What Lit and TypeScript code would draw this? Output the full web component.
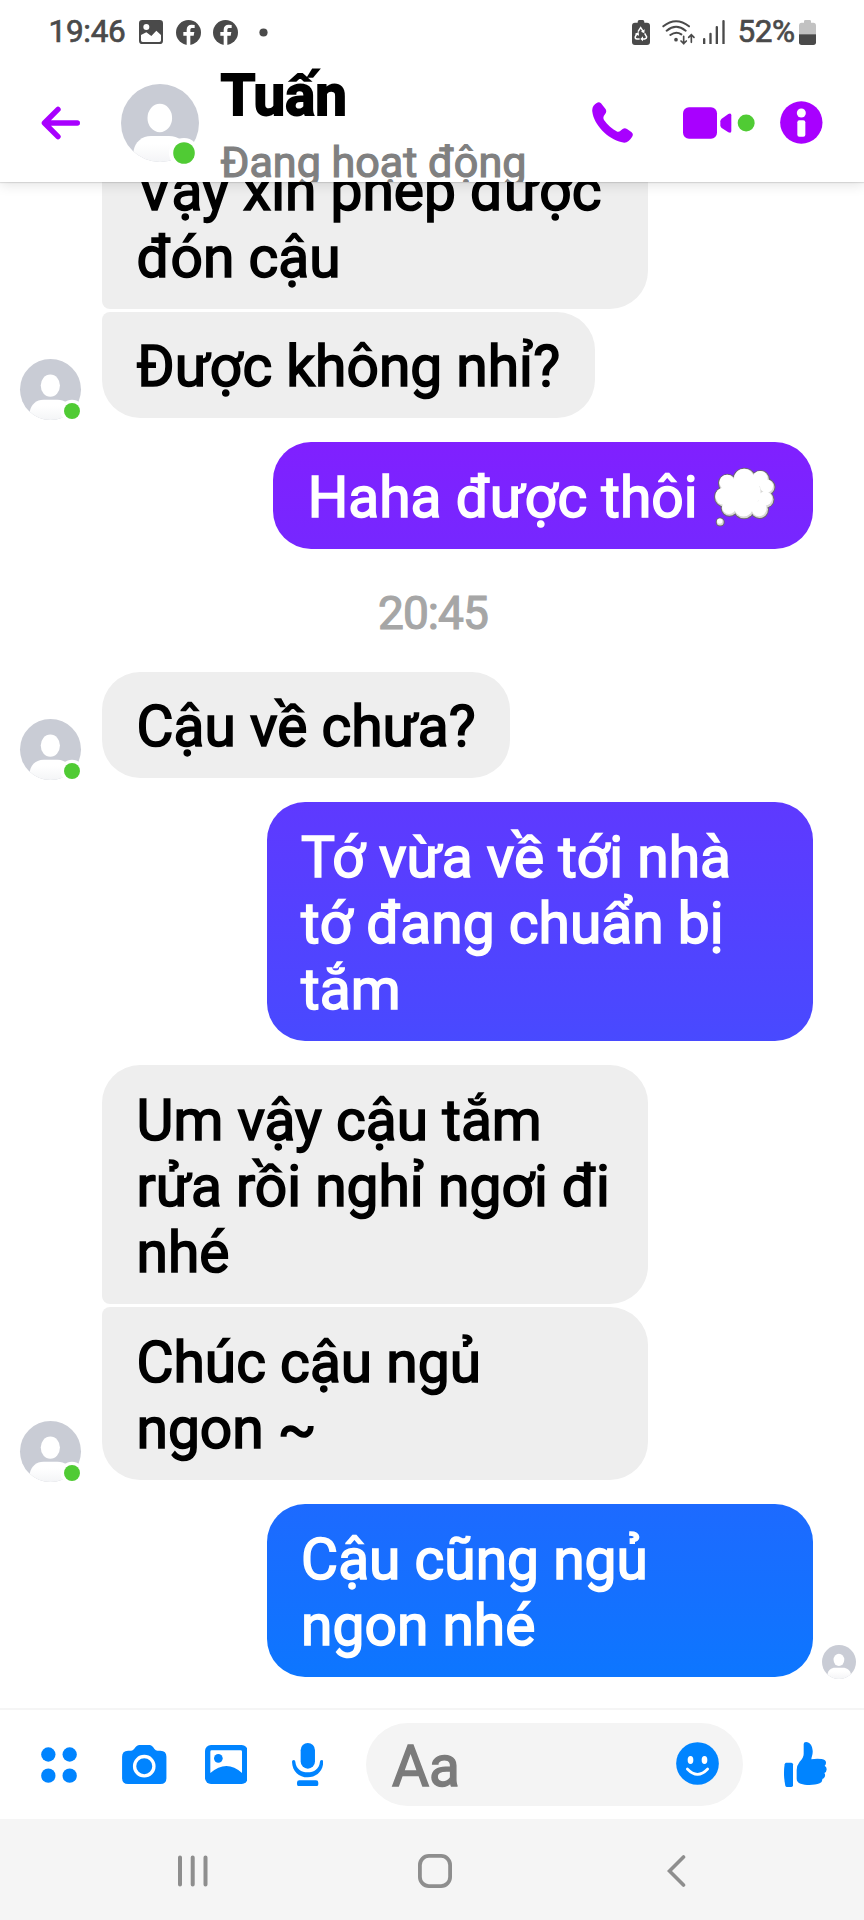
import { LitElement, html, css, svg, nothing } from "lit";
import { customElement, property } from "lit/decorators.js";

type Message = {
  from: "them" | "me";
  text: string;
  wide?: boolean;
  join?: "above" | "below";
  avatar?: boolean;
  thought?: boolean;
  seen?: boolean;
};
type Stamp = { time: string };

const THREAD: (Message | Stamp)[] = [
  { from: "them", text: "Vậy xin phép được\nđón cậu", wide: true, join: "below" },
  { from: "them", text: "Được không nhỉ?", join: "above", avatar: true },
  { from: "me", text: "Haha được thôi ", thought: true },
  { time: "20:45" },
  { from: "them", text: "Cậu về chưa?", avatar: true },
  { from: "me", text: "Tớ vừa về tới nhà\ntớ đang chuẩn bị\ntắm", wide: true },
  { from: "them", text: "Um vậy cậu tắm\nrửa rồi nghỉ ngơi đi\nnhé", wide: true, join: "below" },
  { from: "them", text: "Chúc cậu ngủ\nngon ~", wide: true, join: "above", avatar: true },
  { from: "me", text: "Cậu cũng ngủ\nngon nhé", wide: true, seen: true },
];

@customElement("user-avatar")
export class UserAvatar extends LitElement {
  @property({ reflect: true }) size = "small";

  static styles = css`
    :host { display: block; flex: none; width: 61px; height: 61px; }
    :host([size="large"]) { width: 78px; height: 78px; }
    :host([size="tiny"]) { width: 34px; height: 34px; }
    svg { display: block; width: 100%; height: 100%; overflow: visible; }
  `;

  render() {
    const dot = this.size === "large"
      ? svg`<circle cx="63" cy="69" r="15" fill="#fff"/><circle cx="63" cy="69" r="10.8" fill="#50cb34"/>`
      : this.size === "small"
        ? svg`<circle cx="66.5" cy="66.5" r="14.5" fill="#fff"/><circle cx="66.5" cy="66.5" r="10.2" fill="#50cb34"/>`
        : nothing;
    return html`<svg viewBox="0 0 78 78">
      <defs>
        <clipPath id="c"><circle cx="39" cy="39" r="39"/></clipPath>
        <linearGradient id="g" x1="0" x2="0" y1="0" y2="1">
          <stop offset=".3" stop-color="#fff"/><stop offset="1" stop-color="#f3f4f6"/>
        </linearGradient>
      </defs>
      <circle cx="39" cy="39" r="39" fill="#c9ccd5"/>
      <g clip-path="url(#c)">
        <path d="M12.5 67C14 58 21 52 30 52H48C57 52 65 58 66.500 67L62 79H16Z" fill="url(#g)"/>
      </g>
      <ellipse cx="38.800" cy="34" rx="12.300" ry="14.200" fill="#fff"/>
      ${dot}
    </svg>`;
  }
}

@customElement("chat-message")
export class ChatMessage extends LitElement {
  @property({ attribute: false }) message!: Message;

  static styles = css`
    :host { display: block; }
    .row { display: flex; align-items: flex-end; }
    .them { padding-left: 20px; }
    .me { justify-content: flex-end; padding-right: 51.400px; }
    .slot { flex: none; width: 82px; margin-bottom: -2px; }
    .bubble {
      box-sizing: border-box;
      padding: 22.400px 34.500px 17.800px;
      border-radius: 38px;
      font: 400 56.900px/66.200px Roboto, "Liberation Sans", sans-serif;
      white-space: pre;
      -webkit-text-stroke: 1.600px currentColor;
    }
    .them .bubble { background: #eee; color: #000; }
    .me .bubble {
      color: #fff;
      background: linear-gradient(180deg, #8020ff 442px, #0d76ff 1676px) fixed;
    }
    .wide { width: 546px; }
    .below { border-bottom-left-radius: 8px; }
    .above { border-top-left-radius: 8px; }
    .seen { margin: 0 -43px -2px 9px; }
    .thought { display: inline-block; width: 62px; height: 60px; margin: 0 2.500px -10.500px 2px; }
  `;

  private cloud() {
    const lobes: number[][] = [
      [30.500, 26, 18], [13.500, 16.200, 9], [30.500, 12.800, 11.500], [46.500, 12.500, 9], [53, 20, 8],
      [51.500, 32.500, 8.500], [45.500, 42.500, 9], [30, 41, 10.800], [15.500, 41, 8.300], [10.500, 30, 10],
      [6.200, 55, 4],
    ];
    return html`<svg class="thought" viewBox="0 0 62 60" role="img" aria-label="💭">
      ${lobes.map(([x, y, r]) => svg`<circle cx=${x} cy=${y} r=${r + 0.5} fill="#6c6670"/>`)}
      ${lobes.map(([x, y, r]) => svg`<circle cx=${x} cy=${y} r=${r - 0.5} fill="#d9d9d6"/>`)}
      ${lobes.map(([x, y, r]) => svg`<circle cx=${x - 0.5} cy=${y - 0.9} r=${r - 1.4} fill="#fff"/>`)}
    </svg>`;
  }

  render() {
    const m = this.message;
    return html`<div class="row ${m.from}">
      ${m.from === "them"
        ? html`<div class="slot">${m.avatar ? html`<user-avatar></user-avatar>` : nothing}</div>`
        : nothing}
      <div class="bubble ${m.wide ? "wide" : ""} ${m.join ?? ""}">${m.text}${m.thought ? this.cloud() : nothing}</div>
      ${m.seen ? html`<user-avatar class="seen" size="tiny"></user-avatar>` : nothing}
    </div>`;
  }
}

@customElement("status-bar")
export class StatusBar extends LitElement {
  static styles = css`
    :host {
      display: flex; align-items: center; height: 64px; box-sizing: border-box;
      padding: 0 48px 0 48.500px; color: #4a4a4a;
      font: 400 31.500px/36px Roboto, "Liberation Sans", sans-serif;
      -webkit-text-stroke: .7px currentColor;
    }
    svg { display: block; flex: none; fill: currentColor; }
    .clock { width: 90.500px; letter-spacing: -.3px; }
    .fb { margin-left: 12.700px; }
    .dot { margin-left: 20.500px; }
    .spring { flex: 1; }
    .wifi { margin-left: 12.500px; }
    .signal { margin-left: 6.500px; }
    .percent { margin-left: 13px; width: 61.500px; letter-spacing: -.4px; }
    .line { fill: none; stroke: currentColor; }
  `;

  private facebook() {
    return html`<svg class="fb" width="25" height="25" viewBox="0 0 75 75">
      <circle cx="37.500" cy="37.500" r="37.500"/>
      <path fill="#fff" d="M32 75V47H22V36H32V29C32 19 38 14 47 14L56 15V24H50C45 24 43 26 43 30V36H55L53 47H43V75Z"/>
    </svg>`;
  }

  render() {
    return html`
      <span class="clock">19:46</span>
      <svg width="24" height="24" viewBox="0 0 72 72">
        <path fill-rule="evenodd" d="M10 0H62Q72 0 72 10V62Q72 72 62 72H10Q0 72 0 62V10Q0 0 10 0ZM6 45V61Q6 66 11 66H61Q66 66 66 61V45L52 32L37 48L22 37ZM22 12A9 9 0 1 0 22 30A9 9 0 1 0 22 12Z"/>
      </svg>
      ${this.facebook()}${this.facebook()}
      <svg class="dot" width="9" height="9" viewBox="0 0 9 9"><circle cx="4.500" cy="4.500" r="4.100"/></svg>
      <span class="spring"></span>
      <svg width="18" height="25" viewBox="0 0 54 75">
        <path d="M17 6Q17 0 22 0H32Q37 0 37 6V8H45Q54 8 54 17V66Q54 75 45 75H9Q0 75 0 66V17Q0 8 9 8H17Z"/>
        <g fill="none" stroke="#fff" stroke-width="4.500">
          <path d="M18 35L26 23L34 35M38 40L44 51Q44 56 38 57H30M23 57H15Q8 56 10 50L15 41"/>
        </g>
        <path fill="#fff" d="M38 28L37 40L27 35ZM33 49V64L25 57ZM8 42L20 36L21 47Z"/>
      </svg>
      <svg class="wifi" width="34" height="25" viewBox="0 0 102 75">
        <g class="line" stroke-width="6" stroke-linecap="round">
          <path d="M4 19Q42 -12 81 19M14 32Q42 9 71 32M25 45Q42 32 58 43"/>
          <path stroke-width="5" d="M65 49V71M57 63L65 71L73 63M88 67V45M80 52L88 44L96 52"/>
        </g>
        <circle cx="42" cy="59" r="5.500"/>
      </svg>
      <svg class="signal" width="22" height="24" viewBox="0 0 66 72">
        <path d="M0 57Q0 54 3.500 54T7 57V72H0ZM19 41Q19 38 22.500 38T26 41V72H19ZM38 21Q38 18 41.500 18T45 21V72H38ZM58 3Q58 0 61.500 0T65 3V72H58Z"/>
      </svg>
      <span class="percent">52%</span>
      <svg width="17" height="25" viewBox="0 0 51 75">
        <path fill="#c2c2c2" d="M15 4Q15 0 19 0H32Q36 0 36 4V8H43Q51 8 51 17V43H0V17Q0 8 8 8H15Z"/>
        <path d="M0 43H51V67Q51 75 43 75H8Q0 75 0 67Z"/>
      </svg>`;
  }
}

@customElement("app-root")
export class AppRoot extends LitElement {
  static styles = css`
    :host {
      display: flex; flex-direction: column; width: 864px; height: 1920px;
      overflow: hidden; background: #fff;
      font-family: Roboto, "Liberation Sans", sans-serif;
    }
    svg { display: block; flex: none; }
    .top {
      position: relative; z-index: 1; flex: none; height: 182px; background: #fff;
      box-shadow: 0 1px 1px rgba(0, 0, 0, .1), 0 3px 12px rgba(0, 0, 0, .11);
    }
    .head {
      display: flex; align-items: center; box-sizing: border-box; height: 118px;
      padding: 0 41px; overflow: hidden;
    }
    .head > svg, .head > user-avatar { margin-top: -1px; }
    .person { margin-left: 41px; }
    .who { flex: none; width: 310px; height: 118px; margin-left: 21.500px; white-space: nowrap; }
    .name { font-weight: 700; font-size: 56.500px; line-height: 66px; margin-top: -1px; -webkit-text-stroke: 1.800px #000; }
    .active { font-size: 43.100px; line-height: 54px; margin-top: 7px; color: #808080; -webkit-text-stroke: 1.200px #808080; }
    .call { margin-left: 61px; }
    .video { margin-left: 50.500px; }
    .info { margin-left: 24.500px; }
    .thread {
      flex: 1; min-height: 0; display: flex; flex-direction: column;
      justify-content: flex-end; padding-bottom: 31.200px; overflow: hidden;
    }
    chat-message { flex: none; margin-top: 24.200px; }
    chat-message.joined { margin-top: 3.200px; }
    .stamp {
      flex: none; text-align: center; height: 99px; line-height: 54px; padding-top: 37px;
      box-sizing: border-box; margin-right: -2px;
      font-size: 46px; letter-spacing: -.9px; color: #a6a6a6; -webkit-text-stroke: 1.200px #a6a6a6;
    }
    .compose {
      flex: none; display: flex; align-items: center; box-sizing: border-box; height: 111px;
      border-top: 2px solid #f5f5f5; padding: 0 37.300px 0 41px; color: #0084ff;
    }
    .compose svg { fill: currentColor; }
    .camera { margin-left: 45.300px; }
    .gallery { margin-left: 38px; }
    .mic { margin-left: 44.700px; }
    .like { margin-left: 41px; }
    .field {
      display: flex; align-items: center; justify-content: space-between; box-sizing: border-box;
      width: 377px; height: 82.500px; margin-left: 42.500px; padding: 0 23.800px 0 26px;
      border-radius: 42px; background: #f4f4f4;
    }
    .hint { font-size: 56.900px; line-height: 66px; padding-top: 4px; color: #7b7b7b; -webkit-text-stroke: 1.500px #7b7b7b; }
    .smile { margin-top: -2px; }
    .nav {
      flex: none; display: flex; align-items: center; height: 101px; background: #f5f5f5;
      box-sizing: border-box; padding: 2px 0 0 178px;
    }
    .nav svg { fill: none; stroke: #8e8e8e; }
    .home { margin-left: 209.500px; }
    .back { margin-left: 215.500px; }
  `;

  render() {
    return html`
      <div class="top">
        <status-bar></status-bar>
        <div class="head">
          <svg width="39" height="34" viewBox="0 0 39 34" fill="none" stroke="#a800ff" stroke-width="5.400" stroke-linecap="round" stroke-linejoin="round">
            <path d="M36.300 17H3.500M17 3.400L3.400 17L17 30.600"/>
          </svg>
          <user-avatar class="person" size="large"></user-avatar>
          <div class="who">
            <div class="name">Tuấn</div>
            <div class="active">Đang hoạt động</div>
          </div>
          <svg class="call" width="41" height="41" viewBox="480 307 123 123" fill="#a800ff">
            <path d="M481 336C479 323 486 315 494 310Q501 305 507 311L520 327Q526 335 519 344Q511 352 516 361C526 376 541 389 556 396Q563 398 568 391Q576 383 585 388L598 397Q606 403 600 412C592 424 584 432 570 428C525 416 486 375 481 336Z"/>
          </svg>
          <svg class="video" width="72" height="32" viewBox="755 320 216 96" fill="#a800ff">
            <rect x="755" y="321" width="102" height="94" rx="18"/>
            <path d="M867 363Q867 358 871 355L891 341Q900 337 900 345V392Q900 400 891 396L871 383Q867 380 867 375Z"/>
            <circle cx="944.500" cy="368" r="25.500" fill="#50cb34"/>
          </svg>
          <svg class="info" width="43" height="43" viewBox="0 0 129 129">
            <circle cx="64" cy="64.500" r="63.500" fill="#a800ff"/>
            <circle cx="64" cy="36" r="13.500" fill="#fff"/>
            <rect x="52" y="58" width="24" height="49" rx="6" fill="#fff"/>
          </svg>
        </div>
      </div>

      <div class="thread">
        ${THREAD.map((m) => "time" in m
          ? html`<div class="stamp">${m.time}</div>`
          : html`<chat-message class=${m.join === "above" ? "joined" : ""} .message=${m}></chat-message>`)}
      </div>

      <div class="compose">
        <svg width="36" height="36" viewBox="0 0 108 108">
          <circle cx="22" cy="22.500" r="21.500"/><circle cx="86" cy="22.500" r="21.500"/>
          <circle cx="22" cy="86" r="21.500"/><circle cx="86" cy="86" r="21.500"/>
        </svg>
        <svg class="camera" width="44.500" height="39" viewBox="0 0 133 117">
          <path d="M18 17H27Q32 17 36 12Q44 0 52 0H82Q90 0 97 12Q101 17 106 17H115Q133 17 133 35V99Q133 117 115 117H18Q0 117 0 99V35Q0 17 18 17Z"/>
          <circle cx="66.500" cy="63.500" r="29" fill="none" stroke="#fff" stroke-width="10"/>
        </svg>
        <svg class="gallery" width="42.700" height="39" viewBox="0 0 128 117">
          <rect width="128" height="117" rx="18"/>
          <path fill="#fff" d="M20 16H107Q111 16 111 20V84Q65 42 16 84V20Q16 16 20 16Z"/>
          <circle cx="40" cy="40" r="13"/>
        </svg>
        <svg class="mic" width="31.300" height="43.300" viewBox="0 0 94 130">
          <rect x="26" y="0" width="43" height="77" rx="21.500"/>
          <path d="M0 56Q0 51 5 51Q10 51 10 56C12 78 28 88 47 88S82 78 84 56Q84 51 89 51Q94 51 94 56C93 86 73 103 47 103S1 86 0 56Z"/>
          <rect x="15" y="112" width="64" height="18" rx="7"/>
        </svg>
        <div class="field">
          <span class="hint">Aa</span>
          <svg class="smile" width="43" height="43" viewBox="0 0 129 129">
            <circle cx="64.500" cy="64.500" r="64"/>
            <ellipse cx="43.500" cy="54" rx="8.500" ry="12" fill="#fff"/>
            <ellipse cx="85.500" cy="54" rx="8.500" ry="12" fill="#fff"/>
            <path d="M34 81Q64.500 113 95 81" fill="none" stroke="#fff" stroke-width="8" stroke-linecap="round"/>
          </svg>
        </div>
        <svg class="like" width="42.700" height="45" viewBox="0 0 128 135">
          <path d="M6 62H22Q27 62 27 67V130Q27 135 22 135H9Q5 135 4 131Q-3 98 2 67Q3 62 6 62Z"/>
          <path d="M38 84Q38 70 47 59Q59 47 59 36V6Q59 0 66 0C78 0 85 12 86 26C87 38 82 45 82 52Q96 49 113 51Q126 53 126 62Q126 68 122 71Q128 75 128 82Q128 90 121 93Q125 98 122 105Q120 110 115 111Q116 120 107 124C92 130 66 131 50 125Q38 121 38 110Z"/>
        </svg>
      </div>

      <div class="nav">
        <svg width="30" height="32" viewBox="0 0 30 32" stroke-width="4" stroke-linecap="round">
          <path d="M2 2.500V29.500M14.700 2.500V29.500M27.500 2.500V29.500"/>
        </svg>
        <svg class="home" width="34" height="34" viewBox="0 0 34 34" stroke-width="3.800">
          <rect x="1.900" y="1.900" width="30.200" height="30.200" rx="9"/>
        </svg>
        <svg class="back" width="19" height="32" viewBox="0 0 19 32" stroke-width="3.600" stroke-linecap="round">
          <path d="M16.500 2L2.500 16L16.500 30"/>
        </svg>
      </div>`;
  }
}
